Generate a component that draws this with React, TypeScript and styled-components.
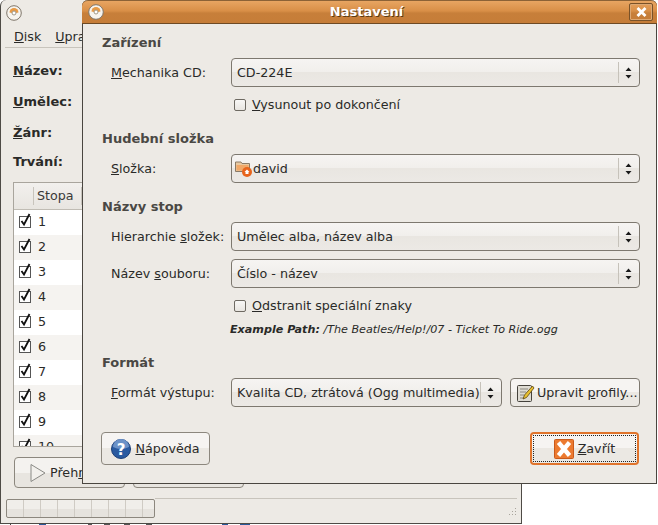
import styled, { createGlobalStyle } from "styled-components";
import type { ReactNode } from "react";

const GlobalStyle = createGlobalStyle`
  html, body { margin: 0; padding: 0; background: #fff; }
  body { width: 658px; height: 525px; overflow: hidden; font-family: "DejaVu Sans", sans-serif; font-size: 12.7px; color: #2a2a28; }
`;

const Desktop = styled.div`
  position: relative;
  width: 658px;
  height: 525px;
  overflow: hidden;
  background: #fff;
`;

const BackWindow = styled.div`
  position: absolute;
  left: 0;
  top: 0;
  width: 522px;
  height: 524px;
  box-sizing: border-box;
  background: #edeae5;
  border: 1px solid #4e4b46;
  border-top: none;
  border-radius: 6px 6px 0 0;
  display: flex;
  flex-direction: column;
`;

const BackTitle = styled.div`
  height: 23px;
  padding: 5px 0 0 5px;
  box-sizing: border-box;
  flex: none;
`;

const MenuBar = styled.div`
  height: 25px;
  flex: none;
  margin: 0 0 0 4px;
  display: flex;
  gap: 14px;
  align-items: center;
  padding: 2px 0 0 9px;
  box-sizing: border-box;
  border-bottom: 1px solid #c8c4bc;
`;

const BackFields = styled.div`
  display: flex;
  flex-direction: column;
  padding: 7px 0 0 12px;
  flex: none;
`;

const BackField = styled.div<{ $h: number }>`
  height: ${(p) => p.$h}px;
  display: flex;
  align-items: center;
  font-weight: bold;
  font-size: 13px;
`;

const TrackList = styled.div`
  margin: 8px 0 0 12px;
  height: 265px;
  flex: none;
  box-sizing: border-box;
  border: 1px solid #a9a59d;
  border-right: none;
  overflow: hidden;
  background: #fff;
`;

const TrackHeader = styled.div`
  height: 26px;
  display: flex;
  align-items: center;
  background: linear-gradient(#f2f0ed, #e8e5e0);
  border-bottom: 1px solid #c0bcb4;
  color: #3a3a38;
`;

const HeaderGap = styled.span`
  width: 19px;
  height: 18px;
  border-right: 1px solid #c8c4bc;
  margin-right: 3px;
`;

const HeaderCell = styled.span`
  width: 44px;
  height: 18px;
  line-height: 18px;
  border-right: 1px solid #c8c4bc;
`;

const TrackRow = styled.div<{ $odd: boolean }>`
  height: 25px;
  box-sizing: border-box;
  padding: 0 0 2px 5px;
  display: flex;
  align-items: center;
  gap: 7px;
  background: ${(p) => (p.$odd ? "#f5f3f0" : "#fff")};
`;

const RowBox = styled.span`
  width: 10px;
  height: 10px;
  border: 1px solid #555;
  background: #fff;
  display: inline-flex;
  align-items: center;
  justify-content: center;
`;

const BackButtons = styled.div`
  display: flex;
  gap: 8px;
  padding: 10px 0 0 13px;
  flex: none;
`;

const BackButton = styled.div`
  width: 111px;
  height: 31px;
  box-sizing: border-box;
  border: 1px solid #8c877e;
  border-radius: 4px;
  background: linear-gradient(#f4f2ef 50%, #e8e5e0 50%);
  display: flex;
  align-items: center;
  gap: 4px;
  padding-left: 15px;
  white-space: nowrap;
`;

const StatusRow = styled.div`
  margin: 10px 4px 0 5px;
  height: 20px;
  flex: none;
  display: flex;
  position: relative;
`;

const StatusLine = styled.div`
  flex: 1;
  border-top: 1px solid #c8c4bc;
`;

const Progress = styled.div`
  width: 149px;
  height: 19px;
  margin-top: 1px;
  box-sizing: border-box;
  border: 1px solid #8c877e;
  border-radius: 2px;
  background: linear-gradient(#f0eeea 50%, #e6e3de 50%);
  display: flex;
  overflow: hidden;
`;

const ProgressCell = styled.span`
  width: 16px;
  flex: none;
  border-right: 1px solid #cfcbc4;
`;

const Grip = styled.svg`
  position: absolute;
  right: 0;
  bottom: 0;
`;

const DesktopStrip = styled.div`
  position: absolute;
  left: 0;
  bottom: 0;
  width: 260px;
  height: 1px;
  background: linear-gradient(
    90deg,
    #fff 0 10px, #444 10px 11px, #fff 11px 39px, #2a5a9a 39px 46px, #fff 46px 88px,
    #555 88px 92px, #fff 92px 104px, #555 104px 110px, #fff 110px 124px, #555 124px 130px,
    #fff 130px 146px, #555 146px 152px, #fff 152px 222px, #2a5a9a 222px 228px, #fff 228px 240px,
    #2a5a9a 240px 250px, #fff 250px
  );
`;

const Dialog = styled.div`
  position: absolute;
  left: 82px;
  top: 0;
  width: 575px;
  height: 484px;
  box-sizing: border-box;
  background: #edeae5;
  border: 1px solid #4a4640;
  border-top: none;
  border-radius: 6px 6px 0 0;
  display: flex;
  flex-direction: column;
`;

const TitleBar = styled.div`
  height: 24px;
  flex: none;
  box-sizing: border-box;
  display: flex;
  align-items: center;
  padding: 0 4px 0 6px;
  background: linear-gradient(#e8a562 0, #d98f47 45%, #c77f3a 55%, #c67d38 100%);
  border-top: 1px solid #8c6236;
  border-bottom: 1px solid #6e4a24;
  border-radius: 6px 6px 0 0;
  margin: 0 -1px;
`;

const TitleText = styled.div`
  flex: 1;
  text-align: center;
  color: #fff;
  font-weight: bold;
  font-size: 13px;
  padding-bottom: 1px;
  text-shadow: 1px 1px 0 #5c3a14;
`;

const CloseBox = styled.div`
  width: 24px;
  height: 18px;
  box-sizing: border-box;
  border: 1px solid #7a5228;
  border-radius: 2px;
  box-shadow: inset 0 0 0 1px #dda873;
  display: flex;
  align-items: center;
  justify-content: center;
`;

const DialogBody = styled.div`
  flex: 1;
  display: flex;
  flex-direction: column;
  padding: 10px 16px 0 19px;
`;

const SectionTitle = styled.div<{ $top: number }>`
  margin-top: ${(p) => p.$top}px;
  height: 17px;
  line-height: 17px;
  font-weight: bold;
  font-size: 13px;
  color: #4a4844;
`;

const FormRow = styled.div<{ $top: number }>`
  margin-top: ${(p) => p.$top}px;
  display: flex;
  align-items: center;
  padding-left: 9px;
`;

const FieldLabel = styled.div`
  width: 120px;
  flex: none;
  white-space: nowrap;
  padding-bottom: 1px;
`;

const Combo = styled.div<{ $wide?: boolean }>`
  width: ${(p) => (p.$wide ? "409px" : "271px")};
  height: 29px;
  flex: none;
  box-sizing: border-box;
  border: 1px solid #7d786f;
  border-radius: 4px;
  background: linear-gradient(#f6f4f2 0, #f1efec 48%, #e9e6e1 50%, #ece9e5 100%);
  display: flex;
  align-items: center;
  padding: 0 0 0 5px;
  white-space: nowrap;
`;

const ComboText = styled.span`
  flex: 1;
  padding-bottom: 1px;
`;

const ComboIcon = styled.span`
  display: flex;
  margin: 0 0 0 -2px;
`;

const ComboArrows = styled.span`
  width: 19px;
  height: 21px;
  flex: none;
  border-left: 1px solid #c6c2ba;
  display: flex;
  align-items: center;
  justify-content: center;
  margin-right: 1px;
`;

const CheckRow = styled.div<{ $top: number }>`
  margin-top: ${(p) => p.$top}px;
  padding-left: 132px;
  display: flex;
  align-items: center;
  gap: 6px;
  height: 18px;
`;

const CheckBox = styled.span`
  width: 10px;
  height: 10px;
  border: 1px solid #6e6a62;
  border-radius: 2px;
  background: linear-gradient(#f8f7f5, #e8e5e0);
`;

const CheckText = styled.span`
  padding-bottom: 2px;
`;

const ExamplePath = styled.div`
  margin-top: 7px;
  padding-left: 128px;
  height: 15px;
  line-height: 15px;
  font-size: 11.15px;
  font-style: italic;
  white-space: nowrap;
`;

const ProfileButton = styled.div`
  margin-left: 8px;
  width: 130px;
  height: 29px;
  box-sizing: border-box;
  flex: none;
  border: 1px solid #7d786f;
  border-radius: 4px;
  background: linear-gradient(#f6f4f2 48%, #ebe8e3 50%);
  display: flex;
  align-items: center;
  padding-left: 5px;
  gap: 2px;
  white-space: nowrap;
`;

const ActionRow = styled.div`
  margin: 25px 0 0 -1px;
  display: flex;
  justify-content: space-between;
  padding-right: 1px;
`;

const ActionButton = styled.div<{ $active?: boolean }>`
  position: relative;
  width: 109px;
  height: 33px;
  box-sizing: border-box;
  border: ${(p) => (p.$active ? "2px solid #e0742c" : "1px solid #8c877e")};
  border-radius: 4px;
  background: linear-gradient(#f6f4f2 48%, #ebe8e3 50%);
  display: flex;
  align-items: center;
  justify-content: center;
  gap: 4px;
`;

const FocusRing = styled.span`
  position: absolute;
  inset: 1px;
  border: 1px dotted #222;
`;

const U = styled.span`
  text-decoration: underline;
`;

const ExampleLabel = styled.b`
  font-weight: bold;
`;

function CdIcon() {
  return (
    <svg width="16" height="16" viewBox="0 0 16 16">
      <circle cx="8" cy="8" r="7.3" fill="#f7f4ee" stroke="#7f766a" />
      <path d="M3.5 7.5 A4.5 4.5 0 0 1 12.5 7.5 L10 8 H6 Z" fill="#e79a46" />
      <circle cx="8" cy="8" r="2" fill="#fff" stroke="#a09888" />
    </svg>
  );
}

function UpDown() {
  return (
    <svg width="7" height="12" viewBox="0 0 7 12">
      <path d="M3.5 0.5 L6.5 4 H0.5 Z M0.5 8 H6.5 L3.5 11.5 Z" fill="#1a1a1a" />
    </svg>
  );
}

function TickBox() {
  return (
    <RowBox>
      <svg width="12" height="14" viewBox="0 0 12 14" style={{ overflow: "visible", marginTop: -3 }}>
        <path d="M2.5 8 L5 11.5 L10.5 1" fill="none" stroke="#111" strokeWidth="1.8" />
      </svg>
    </RowBox>
  );
}

function FolderHome() {
  return (
    <svg width="18" height="18" viewBox="0 0 18 18">
      <path d="M0.5 5 V2 H6 L7 3.5 H14.5 V11.5 H0.5 Z" fill="#e8c8a0" stroke="#8a7a66" />
      <rect x="1.5" y="5" width="12" height="5.5" fill="#f0a868" />
      <circle cx="12" cy="12" r="5" fill="#e8641c" />
      <path d="M12 9.5 L14.5 12 H13.5 V14 H10.5 V12 H9.5 Z" fill="#fff" />
    </svg>
  );
}

function EditIcon() {
  return (
    <svg width="19" height="20" viewBox="0 0 19 20">
      <rect x="1.5" y="2.5" width="14" height="16" rx="1" fill="#dedbd3" stroke="#45423c" />
      <path d="M4 6 H12 M4 9 H10 M4 12 H8 M4 15 H8" stroke="#8a877f" />
      <path d="M16.5 3 L8.5 12 L7 16 L10.5 14.5 L18 5 Z" fill="#e8c030" stroke="#5a4410" strokeWidth="0.8" />
    </svg>
  );
}

function HelpIcon() {
  return (
    <svg width="20" height="20" viewBox="0 0 20 20">
      <circle cx="10" cy="10" r="9.5" fill="#2a5aa0" stroke="#1c3f78" />
      <path d="M2 8 A8 8 0 0 1 18 8 Q10 12 2 8 Z" fill="#6c92c8" />
      <text x="10" y="15.5" textAnchor="middle" fontSize="15" fontWeight="bold" fill="#fff" fontFamily="DejaVu Sans">?</text>
    </svg>
  );
}

function CloseIcon() {
  return (
    <svg width="20" height="20" viewBox="0 0 20 20">
      <rect x="0.5" y="0.5" width="19" height="19" rx="1" fill="#ec7a30" stroke="#c9591a" />
      <path d="M4.5 3.5 L15.5 16.5 M15.5 3.5 L4.5 16.5" stroke="#fff" strokeWidth="4.4" />
    </svg>
  );
}

function PlayIcon() {
  return (
    <svg width="16" height="20" viewBox="0 0 16 20">
      <path d="M1 1.5 L15 10 L1 18.5 Z" fill="#f2f0ec" stroke="#8a8a86" />
    </svg>
  );
}

function Row({ label, children }: { label: ReactNode; children: ReactNode }) {
  return (
    <>
      <FieldLabel>{label}</FieldLabel>
      {children}
    </>
  );
}

const tracks = [1, 2, 3, 4, 5, 6, 7, 8, 9, 10];

export default function App() {
  return (
    <Desktop>
      <GlobalStyle />
      <DesktopStrip />
      <BackWindow>
        <BackTitle>
          <CdIcon />
        </BackTitle>
        <MenuBar>
          <span><U>D</U>isk</span>
          <span><U>U</U>pravit</span>
        </MenuBar>
        <BackFields>
          <BackField $h={31}><span><U>N</U>ázev:</span></BackField>
          <BackField $h={30}><span><U>U</U>mělec:</span></BackField>
          <BackField $h={32}><span><U>Ž</U>ánr:</span></BackField>
          <BackField $h={26}>Trvání:</BackField>
        </BackFields>
        <TrackList>
          <TrackHeader>
            <HeaderGap />
            <HeaderCell>Stopa</HeaderCell>
          </TrackHeader>
          {tracks.map((n) => (
            <TrackRow key={n} $odd={n % 2 === 0}>
              <TickBox />
              <span>{n}</span>
            </TrackRow>
          ))}
        </TrackList>
        <BackButtons>
          <BackButton>
            <PlayIcon />
            <span>Přeh<U>r</U>át</span>
          </BackButton>
          <BackButton />
        </BackButtons>
        <StatusRow>
          <Progress>
            {Array.from({ length: 9 }, (_, i) => (
              <ProgressCell key={i} />
            ))}
          </Progress>
          <StatusLine />
          <Grip width="12" height="12" viewBox="0 0 12 12">
            <path d="M10 2h1v1h-1zM7 5h1v1H7zM10 5h1v1h-1zM4 8h1v1H4zM7 8h1v1H7zM10 8h1v1h-1z" fill="#a8a49c" />
          </Grip>
        </StatusRow>
      </BackWindow>
      <Dialog>
        <TitleBar>
          <CdIcon />
          <TitleText>Nastavení</TitleText>
          <CloseBox>
            <svg width="11" height="10" viewBox="0 0 11 10">
              <path d="M1.5 1 L9.5 9 M9.5 1 L1.5 9" stroke="#fff" strokeWidth="2.8" />
            </svg>
          </CloseBox>
        </TitleBar>
        <DialogBody>
          <SectionTitle $top={0}>Zařízení</SectionTitle>
          <FormRow $top={7}>
            <Row label={<><U>M</U>echanika CD:</>}>
              <Combo $wide>
                <ComboText>CD-224E</ComboText>
                <ComboArrows><UpDown /></ComboArrows>
              </Combo>
            </Row>
          </FormRow>
          <CheckRow $top={9}>
            <CheckBox />
            <CheckText><U>V</U>ysunout po dokončení</CheckText>
          </CheckRow>
          <SectionTitle $top={16}>Hudební složka</SectionTitle>
          <FormRow $top={7}>
            <Row label={<><U>S</U>ložka:</>}>
              <Combo $wide>
                <ComboIcon><FolderHome /></ComboIcon>
                <ComboText>david</ComboText>
                <ComboArrows><UpDown /></ComboArrows>
              </Combo>
            </Row>
          </FormRow>
          <SectionTitle $top={15}>Názvy stop</SectionTitle>
          <FormRow $top={7}>
            <Row label={<>Hierarchie <U>s</U>ložek:</>}>
              <Combo $wide>
                <ComboText>Umělec alba, název alba</ComboText>
                <ComboArrows><UpDown /></ComboArrows>
              </Combo>
            </Row>
          </FormRow>
          <FormRow $top={8}>
            <Row label={<>Název <U>s</U>ouboru:</>}>
              <Combo $wide>
                <ComboText>Číslo - název</ComboText>
                <ComboArrows><UpDown /></ComboArrows>
              </Combo>
            </Row>
          </FormRow>
          <CheckRow $top={9}>
            <CheckBox />
            <CheckText><U>O</U>dstranit speciální znaky</CheckText>
          </CheckRow>
          <ExamplePath>
            <ExampleLabel>Example Path:</ExampleLabel> /The Beatles/Help!/07 - Ticket To Ride.ogg
          </ExamplePath>
          <SectionTitle $top={17}>Formát</SectionTitle>
          <FormRow $top={7}>
            <Row label={<><U>F</U>ormát výstupu:</>}>
              <Combo>
                <ComboText>Kvalita CD, ztrátová (Ogg multimedia)</ComboText>
                <ComboArrows><UpDown /></ComboArrows>
              </Combo>
              <ProfileButton>
                <EditIcon />
                <span>Upravit <U>p</U>rofily...</span>
              </ProfileButton>
            </Row>
          </FormRow>
          <ActionRow>
            <ActionButton>
              <HelpIcon />
              <span><U>N</U>ápověda</span>
            </ActionButton>
            <ActionButton $active>
              <FocusRing />
              <CloseIcon />
              <span><U>Z</U>avřít</span>
            </ActionButton>
          </ActionRow>
        </DialogBody>
      </Dialog>
    </Desktop>
  );
}
